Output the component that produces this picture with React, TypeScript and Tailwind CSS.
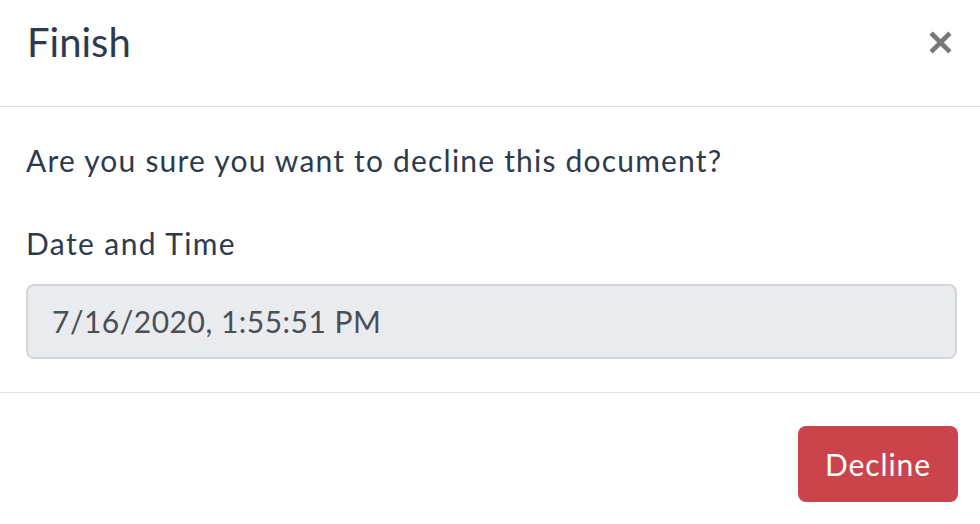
import { X } from 'lucide-react';

export default function App() {
  return (
    <div className="w-[980px] h-[524px] bg-white text-[#2d3a4d] font-['Lato',_'Noto_Sans',_sans-serif] overflow-hidden">
      {/* Header */}
      <div className="h-[107px] border-b border-[#dfe1e5] flex items-start justify-between pl-[27px] pr-[24px] pt-[18px]">
        <h2 className="text-[40px] leading-[48px] font-normal">Finish</h2>
        <button className="mt-[9px] text-[#777777]">
          <X className="w-[31px] h-[31px]" strokeWidth={3.6} strokeLinecap="square" />
        </button>
      </div>

      {/* Body */}
      <div className="px-[26px] pt-[35px] pb-[33px] border-b border-[#dfe1e5]">
        <p className="text-[30px] leading-[36px] tracking-[1.2px]">
          Are you sure you want to decline this document?
        </p>
        <label className="block mt-[47px] text-[30px] leading-[36px] tracking-[1.4px]">
          Date and Time
        </label>
        <div className="mt-[23px] h-[75px] w-[931px] rounded-[8px] border-2 border-[#d2d5da] bg-[#e9ebef] flex items-center pl-[24px] text-[30px] tracking-[0.5px] text-[#4a4f55]">
          7/16/2020, 1:55:51 PM
        </div>
      </div>

      {/* Footer */}
      <div className="flex justify-end pt-[33px] pr-[22px]">
        <button className="w-[160px] h-[76px] rounded-[8px] bg-[#cc444b] text-white text-[30px] tracking-[0.9px]">
          Decline
        </button>
      </div>
    </div>
  );
}
